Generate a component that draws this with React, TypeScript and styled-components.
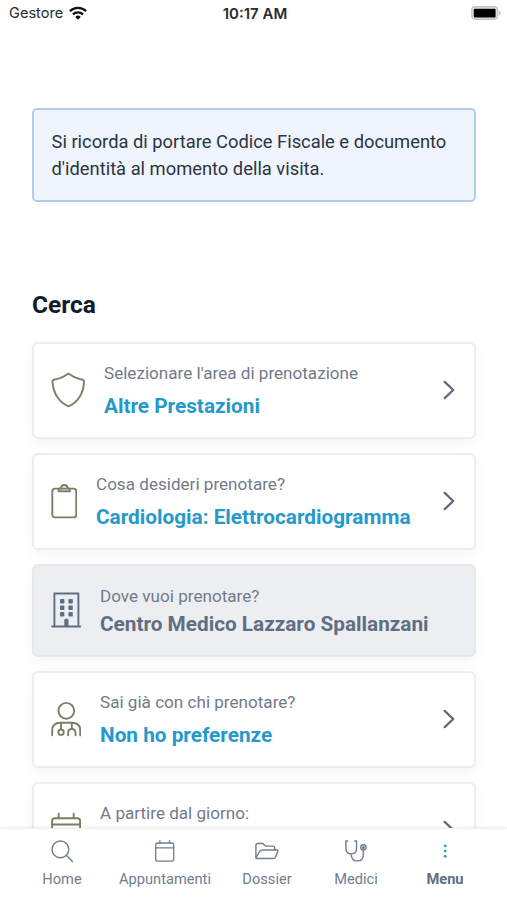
import React from 'react';
import styled, { createGlobalStyle } from 'styled-components';

const GlobalStyle = createGlobalStyle`
  * { box-sizing: border-box; }
  body { margin: 0; background: #fff; font-family: Roboto, sans-serif; }
`;

const Screen = styled.div`
  display: flex;
  flex-direction: column;
  width: 507px;
  height: 900px;
  overflow: hidden;
  background: #fff;
`;

const StatusBar = styled.header`
  display: grid;
  grid-template-columns: 1fr auto 1fr;
  align-items: center;
  flex: none;
  height: 28px;
  padding: 0 6px 2px 9px;
  font-family: Inter, sans-serif;
  font-size: 14.6px;
  color: #2a2a2a;
`;

const Carrier = styled.div`
  display: flex;
  align-items: center;
  gap: 6px;
`;

const Clock = styled.time`
  position: relative;
  font-size: 15px;
  font-weight: 600;
`;

const BatterySlot = styled.div`
  display: flex;
  justify-content: flex-end;
`;

const Content = styled.main`
  flex: 1;
  min-height: 0;
  overflow: hidden;
  padding: 80px 31px 0 32px;
`;

const Notice = styled.p`
  margin: 0;
  height: 94px;
  padding: 18px 17px 18px 17.5px;
  border: 2px solid #b3cced;
  border-radius: 5px;
  background: #eff4fd;
  color: #2b3442;
  font-size: 18.33px;
  line-height: 27px;
`;

const Heading = styled.h2`
  margin: 88px 0 22px;
  color: #121c2b;
  font-size: 24.5px;
  font-weight: 700;
  line-height: 30px;
`;

const CardList = styled.div`
  display: flex;
  flex-direction: column;
  gap: 14px;
`;

const Card = styled.div<{ $locked?: boolean }>`
  display: flex;
  align-items: center;
  flex: none;
  gap: 19px;
  height: ${p => (p.$locked ? 93 : 97)}px;
  padding: 0 19px 2px 17px;
  border: 2px solid ${p => (p.$locked ? '#e5e7e9' : '#ededee')};
  border-radius: 6px;
  background: ${p => (p.$locked ? '#eceef2' : '#fff')};
  box-shadow: 0 5px 14px rgba(0, 0, 0, 0.04);
  color: ${p => (p.$locked ? '#5f6e82' : '#7e7d65')};
`;

const CardText = styled.div<{ $tight?: boolean }>`
  display: flex;
  flex: 1;
  flex-direction: column;
  gap: ${p => (p.$tight ? 4 : 9)}px;
  height: ${p => (p.$tight ? 52 : 57)}px;
  white-space: nowrap;
`;

const Label = styled.span`
  color: #727b8a;
  font-size: 17.1px;
  line-height: 24px;
`;

const Value = styled.span<{ $locked?: boolean }>`
  color: ${p => (p.$locked ? '#5f6e82' : '#2499ca')};
  font-size: 20.76px;
  font-weight: 700;
  line-height: 24px;
`;

const TabBar = styled.nav`
  display: grid;
  grid-template-columns: 102px 104px 100px 78px 100px;
  flex: none;
  height: 72px;
  padding: 10px 0 0 11px;
  border-top: 1px solid #f0f0f1;
  background: #fff;
  box-shadow: 0 -1px 3px rgba(0, 0, 0, 0.06);
  z-index: 1;
`;

const Tab = styled.a<{ $active?: boolean }>`
  display: flex;
  flex-direction: column;
  align-items: center;
  gap: 6px;
  color: ${p => (p.$active ? '#5f6e82' : '#727d8e')};
  font-size: 14.65px;
  font-weight: ${p => (p.$active ? 700 : 400)};
  line-height: 20px;
`;

const Icon = styled.svg`
  display: block;
  flex: none;
  fill: none;
  stroke: currentColor;
  stroke-linecap: round;
  stroke-linejoin: round;
`;

const ChevronIcon = styled(Icon)`
  color: #626b7b;
`;

const Chevron = () => (
  <ChevronIcon width="12" height="20" viewBox="0 0 12 20" strokeWidth="2.3">
    <path d="M1.7 1.9 10.2 10l-8.5 8.1" />
  </ChevronIcon>
);

const Wifi = () => (
  <Icon width="18" height="14" viewBox="0 0 18 14" strokeWidth="2.3">
    <g stroke="#111" strokeLinecap="butt">
      <path d="M.9 5.1C5.3.8 12.7.8 17.1 5.1" />
      <path d="M3.9 8.3c2.9-2.7 7.3-2.7 10.2 0" />
    </g>
    <path d="M9 13.7 6.2 10.9a4.1 4.1 0 0 1 5.6 0z" fill="#111" stroke="none" />
  </Icon>
);

const Battery = () => (
  <svg width="30" height="14" viewBox="0 0 30 14">
    <rect x=".8" y=".8" width="25.8" height="12.4" rx="3.4" fill="#e6e6e6" stroke="#c4c4c4" strokeWidth="1.4" />
    <rect x="2.8" y="2.8" width="21.8" height="8.6" rx="1" fill="#000" />
    <path d="M27.9 4.7c2.2.6 2.2 4 0 4.6z" fill="#c0c0c0" />
  </svg>
);

const Shield = () => (
  <Icon width="34" height="36" viewBox="0 0 34 36" strokeWidth="1.9">
    <path d="M17.5 1.6C13.2 4.7 8 7 2.7 7.7 1.4 7.9 1.5 8.6 1.5 9.6 2 20.5 7.6 30.2 17.5 34.3 27.4 30.2 32.8 20.5 33 9.6c0-1 0-1.7-1.2-1.9C26.8 7 21.8 4.7 17.5 1.6Z" />
  </Icon>
);

const Clipboard = () => (
  <Icon width="26" height="36" viewBox="0 0 26 36" strokeWidth="1.9">
    <rect x="1.3" y="5.6" width="24" height="28.8" rx="2.6" />
    <path d="M7.6 6.4q0-1 1.2-1h1.1c.5-4.5 6.2-4.5 6.7 0h1.1q1.2 0 1.2 1v1.8H7.6Z" />
  </Icon>
);

const Building = () => (
  <Icon width="30" height="36" viewBox="0 0 30 36" strokeWidth="1.9">
    <path d="M3.4 34.3V1.5h24v32.8M1.1 34.5h28.2" />
    <g fill="currentColor" stroke="none">
      <rect x="9" y="7.1" width="4.4" height="4.4" rx=".8" />
      <rect x="17.4" y="7.1" width="4.4" height="4.4" rx=".8" />
      <rect x="9" y="13.6" width="4.4" height="4.4" rx=".8" />
      <rect x="17.4" y="13.6" width="4.4" height="4.4" rx=".8" />
      <rect x="9" y="20.1" width="4.4" height="4.4" rx=".8" />
      <rect x="17.4" y="20.1" width="4.4" height="4.4" rx=".8" />
      <path d="M13.3 34v-5.8q0-1.6 2.1-1.6t2.1 1.6V34z" />
    </g>
  </Icon>
);

const Doctor = () => (
  <Icon width="30" height="36" viewBox="0 0 30 36" strokeWidth="1.9">
    <circle cx="15.3" cy="9.8" r="7.9" />
    <path d="M1.2 34.3v-4.8q0-7.5 8.2-7.7h11.6q8.2.2 8.2 7.7v4.8" />
    <path d="M10 22v6.5M20.8 22v5.8M17.1 34.3v-2.5q0-3.8 3.7-3.8t3.7 3.8v2.5" />
    <circle cx="10" cy="31.2" r="2.7" />
  </Icon>
);

const CardCalendar = () => (
  <Icon width="30" height="36" viewBox="0 0 30 36" strokeWidth="1.9">
    <rect x="1.1" y="6.3" width="28" height="28" rx="2.6" />
    <path d="M1.1 12.5h28M7.7 6V1.6M22.7 6V1.6" />
  </Icon>
);

const Search = () => (
  <Icon width="24" height="24" viewBox="0 0 24 24" strokeWidth="1.4">
    <circle cx="10.4" cy="10.4" r="8.4" />
    <path d="m16.6 16.6 5.8 5.8" />
  </Icon>
);

const TabCalendar = () => (
  <Icon width="24" height="24" viewBox="0 0 24 24" strokeWidth="1.3">
    <rect x="2.7" y="4" width="18" height="18.2" rx="1.8" />
    <path d="M2.7 8.8h18M6.9 4V1.7M16.5 4V1.7" />
  </Icon>
);

const Folder = () => (
  <Icon width="24" height="24" viewBox="0 0 24 24" strokeWidth="1.4">
    <path d="M.9 18.5V6.1q0-1.6 1.6-1.6h5.3l2.7 2.6h7.6q1.6 0 1.6 1.6v2.2" />
    <path d="M7.2 11h14.9q1.2 0 .7 1.2l-2.3 6q-.5 1.3-1.8 1.3H1.8q-1.2 0-.7-1.2l3.8-6.1q.7-1.2 2.3-1.2Z" />
  </Icon>
);

const Stethoscope = () => (
  <Icon width="24" height="24" viewBox="0 0 24 24" strokeWidth="1.4">
    <path d="M3.6 2H1.9v7.5q0 5.4 5.3 5.4t5.3-5.4V2h-1.7M7.2 14.9q0 7 6.1 7t6.1-6.7v-4" />
    <circle cx="19.4" cy="8.4" r="2.6" />
    <circle cx="19.4" cy="8.4" r=".8" />
  </Icon>
);

const Dots = () => (
  <Icon width="24" height="24" viewBox="0 0 24 24">
    <g fill="#2a9fd0" stroke="none">
      <circle cx="12.2" cy="6.9" r="1.4" />
      <circle cx="12.2" cy="12.1" r="1.4" />
      <circle cx="12.2" cy="17.3" r="1.4" />
    </g>
  </Icon>
);

interface Step {
  icon: React.ReactNode;
  label: string;
  value?: string;
  locked?: boolean;
}

const steps: Step[] = [
  { icon: <Shield />, label: "Selezionare l'area di prenotazione", value: 'Altre Prestazioni' },
  { icon: <Clipboard />, label: 'Cosa desideri prenotare?', value: 'Cardiologia: Elettrocardiogramma' },
  { icon: <Building />, label: 'Dove vuoi prenotare?', value: 'Centro Medico Lazzaro Spallanzani', locked: true },
  { icon: <Doctor />, label: 'Sai già con chi prenotare?', value: 'Non ho preferenze' },
  { icon: <CardCalendar />, label: 'A partire dal giorno:' },
];

const tabs = [
  { icon: <Search />, label: 'Home' },
  { icon: <TabCalendar />, label: 'Appuntamenti' },
  { icon: <Folder />, label: 'Dossier' },
  { icon: <Stethoscope />, label: 'Medici' },
  { icon: <Dots />, label: 'Menu', active: true },
];

export default function App() {
  return (
    <Screen>
      <GlobalStyle />
      <StatusBar>
        <Carrier>
          Gestore
          <Wifi />
        </Carrier>
        <Clock>10:17 AM</Clock>
        <BatterySlot>
          <Battery />
        </BatterySlot>
      </StatusBar>
      <Content>
        <Notice>
          Si ricorda di portare Codice Fiscale e documento d'identità al momento della visita.
        </Notice>
        <Heading>Cerca</Heading>
        <CardList>
          {steps.map(step => (
            <Card key={step.label} $locked={step.locked}>
              {step.icon}
              <CardText $tight={step.locked}>
                <Label>{step.label}</Label>
                {step.value && <Value $locked={step.locked}>{step.value}</Value>}
              </CardText>
              {!step.locked && <Chevron />}
            </Card>
          ))}
        </CardList>
      </Content>
      <TabBar>
        {tabs.map(tab => (
          <Tab key={tab.label} $active={tab.active}>
            {tab.icon}
            {tab.label}
          </Tab>
        ))}
      </TabBar>
    </Screen>
  );
}
